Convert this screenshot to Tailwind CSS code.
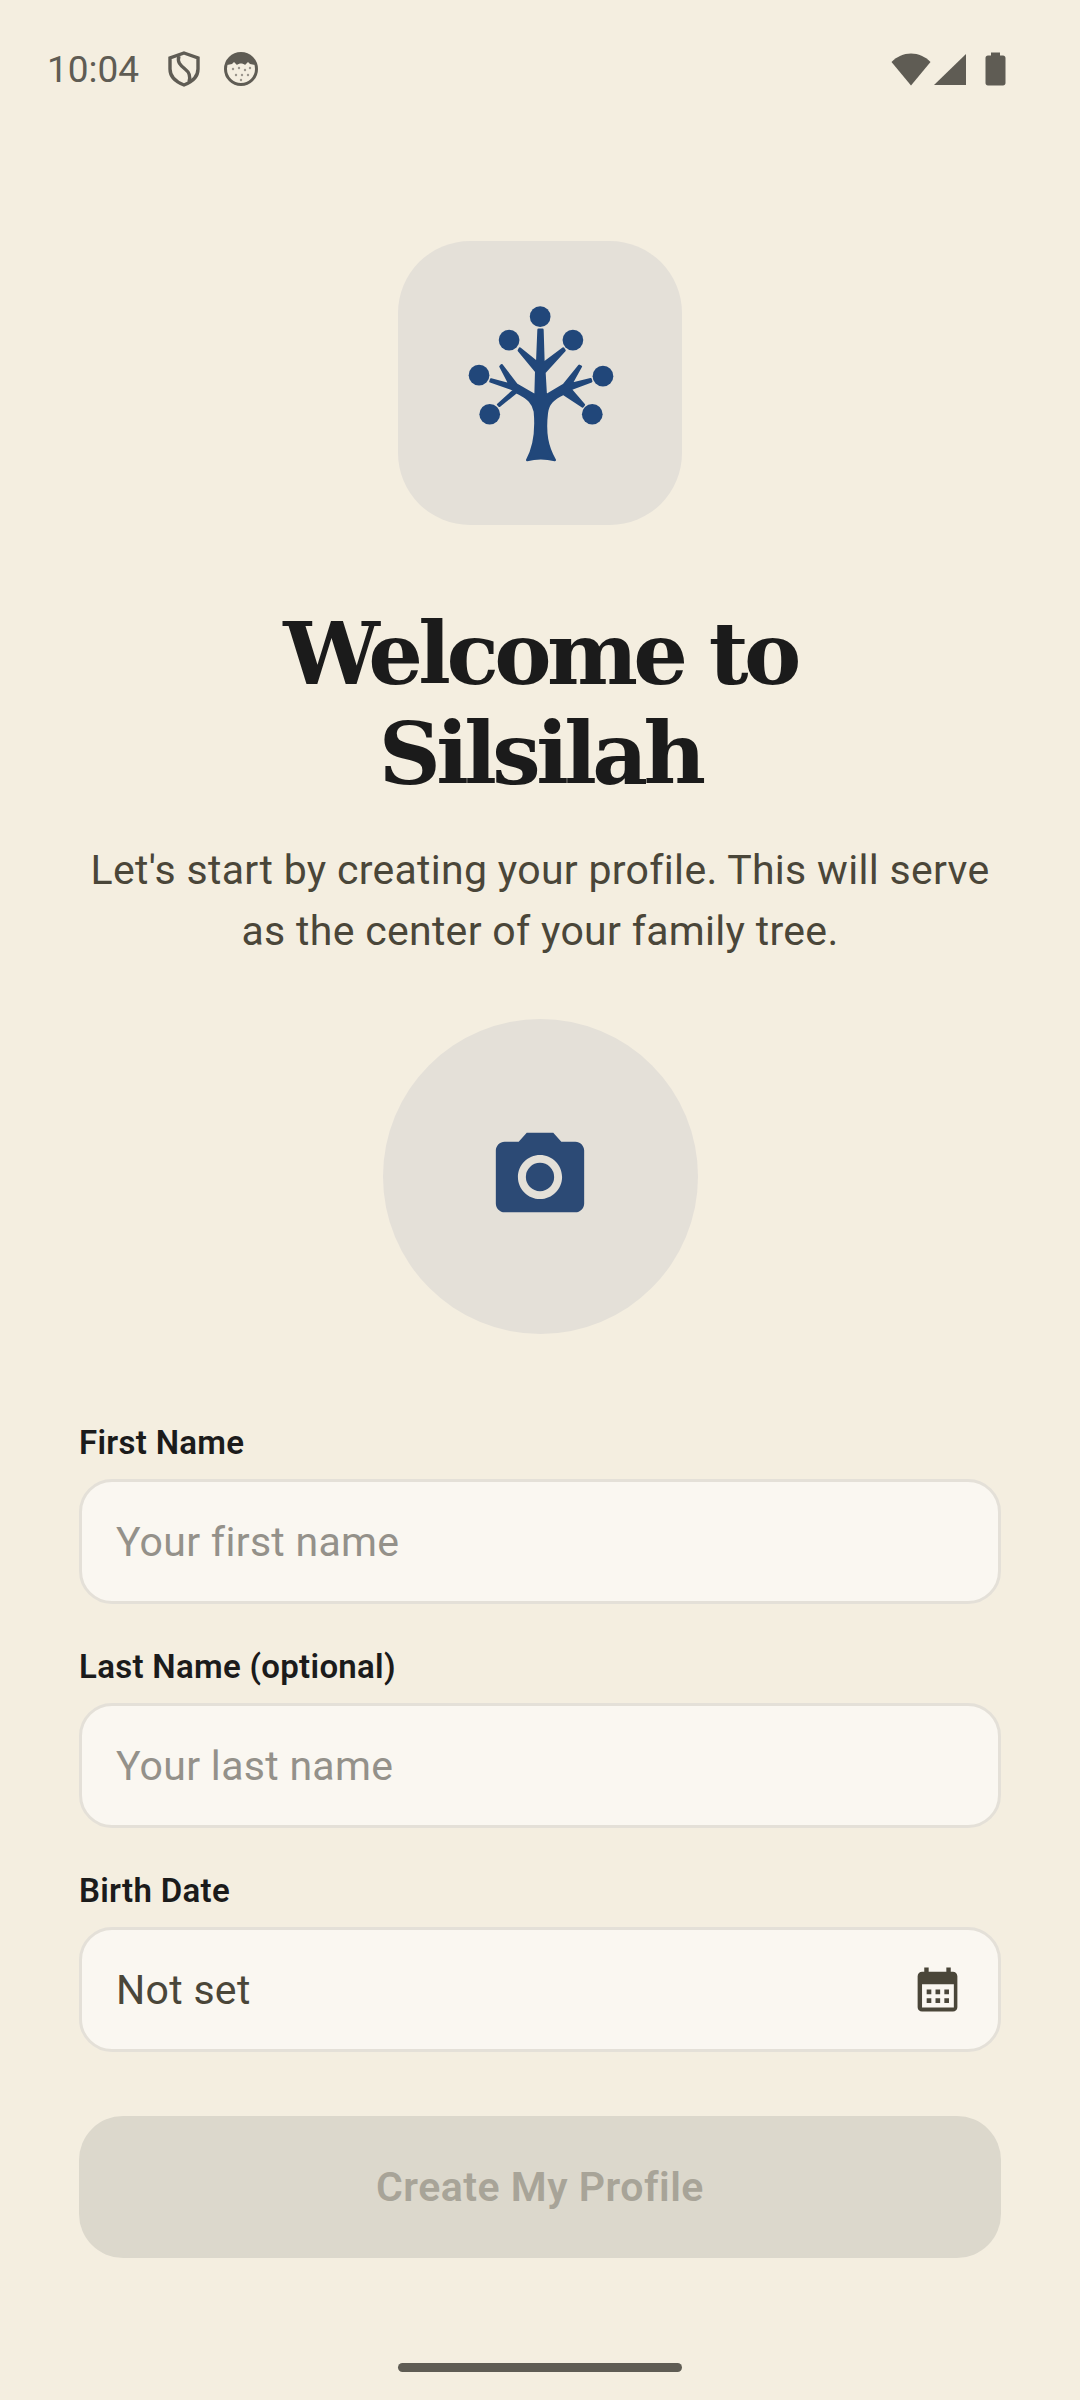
<!DOCTYPE html>
<html lang="en">
    <head>
        <meta charset="UTF-8" />
        <meta name="viewport" content="width=device-width, initial-scale=1.0" />
        <title>Silsilah</title>
        <script src="https://cdn.jsdelivr.net/npm/@tailwindcss/browser@4"></script>
    </head>
    <body class="bg-[#f4eee0] font-['Roboto',sans-serif]">
        <div class="flex h-[2400px] w-[1080px] flex-col items-center overflow-hidden">
            <!-- Status bar -->
            <div class="flex h-[138px] w-full items-center justify-between pl-[47px] pr-[74px] text-[#5f5c54]">
                <div class="flex items-center">
                    <span class="w-[121px] text-[37px] leading-none">10:04</span>
                    <svg class="h-[36px] w-[32px]" viewBox="0 0 32 36" fill="none" stroke="currentColor" stroke-width="3.4">
                        <path d="M16 2 L30 7 V18 C30 26 24 31 16 34 C8 31 2 26 2 18 V7 Z" />
                        <path d="M11 5 C9 11 12 14 17 18 C21 21 23 25 21 31" />
                    </svg>
                    <svg class="ml-[24px] h-[34px] w-[34px]" viewBox="0 0 34 34">
                        <circle cx="17" cy="17" r="15.5" fill="none" stroke="currentColor" stroke-width="3" />
                        <path d="M3 13 C5 5 11 1.500 17 1.500 C23 1.500 29 5 31 13 L26 12 L24 10 L21 13 C19 11 15 11 13 13 L10 10 L8 12 Z" fill="currentColor" />
                        <g fill="currentColor" opacity="0.6">
                            <circle cx="9" cy="17" r="1.200" /><circle cx="15" cy="16" r="1.200" /><circle cx="21" cy="18" r="1.200" /><circle cx="26" cy="16" r="1.200" />
                            <circle cx="12" cy="23" r="1.200" /><circle cx="18" cy="23" r="1.200" /><circle cx="24" cy="23" r="1.200" /><circle cx="17" cy="28" r="1.200" />
                        </g>
                    </svg>
                </div>
                <div class="flex items-center">
                    <svg class="h-[33px] w-[40px]" viewBox="0 0 40 33" fill="currentColor"><path d="M20 32.500 L0.500 9 C6 3.500 12.500 0.500 20 0.500 C27.500 0.500 34 3.500 39.500 9 Z" /></svg>
                    <svg class="ml-[2px] h-[33px] w-[34px]" viewBox="0 0 34 33" fill="currentColor"><path d="M33 1 V32 H1 Z" /></svg>
                    <svg class="ml-[18px] h-[34px] w-[21px]" viewBox="0 0 21 34" fill="currentColor"><path d="M6 0.500 H15 V3.500 H18 C19.500 3.500 20.500 4.500 20.500 6 V31 C20.500 32.500 19.500 33.500 18 33.500 H3 C1.500 33.500 0.500 32.500 0.500 31 V6 C0.500 4.500 1.500 3.500 3 3.500 H6 Z" /></svg>
                </div>
            </div>

            <!-- Logo -->
            <div class="mt-[103px] flex h-[284px] w-[284px] shrink-0 items-center justify-center rounded-[72px] bg-[#e4e0d8]">
                <svg class="h-[157px] w-[147px]" viewBox="230 226 440 470" fill="#21477a">
                    <circle cx="449" cy="261" r="31" /><circle cx="356" cy="331" r="31" /><circle cx="547" cy="331" r="31" />
                    <circle cx="266" cy="436" r="31" /><circle cx="637" cy="439" r="31" /><circle cx="298" cy="553" r="31" /><circle cx="605" cy="553" r="31" />
                    <path stroke="#21477a" stroke-width="7" stroke-linejoin="round" d="M410 690 C432 650 438 600 433 545 C428 520 415 505 378 487 L327 528 L323 524 L372 480 L300 455 L302 449 L358 464 L330 410 L334 406 L378 464 L435 497 L437 425 L385 362 L388 356 L440 398 L444 300 L456 300 L459 400 L518 356 L522 362 L462 428 L466 497 L520 465 L566 408 L571 410 L542 462 L600 448 L602 455 L540 478 L580 525 L576 530 L518 492 C490 505 472 520 469 550 C462 610 470 650 493 690 Q450 680 410 690 Z" />
                </svg>
            </div>

            <!-- Heading -->
            <h1 class="mt-[79px] w-[640px] text-center font-['DejaVu_Serif',serif] text-[86px] font-bold leading-[100px] tracking-[-4.6px] text-[#1b1b1b]">Welcome to Silsilah</h1>
            <p class="mt-[36px] w-[920px] text-center text-[41px] leading-[61px] tracking-[0.3px] text-[#4a4639]">Let's start by creating your profile. This will serve as the center of your family tree.</p>

            <!-- Photo picker -->
            <div class="mt-[57px] flex h-[315px] w-[315px] shrink-0 items-center justify-center rounded-full bg-[#e4e0d8]">
                <svg class="h-[106px] w-[106px]" viewBox="0 0 24 24" fill="#2c4a75">
                    <circle cx="12" cy="12" r="3.200" />
                    <path d="M9 2L7.170 4H4c-1.100 0-2 .9-2 2v12c0 1.100.9 2 2 2h16c1.100 0 2-.9 2-2V6c0-1.100-.9-2-2-2h-3.170L15 2H9zm3 15c-2.760 0-5-2.240-5-5s2.240-5 5-5 5 2.240 5 5-2.240 5-5 5z" />
                </svg>
            </div>

            <!-- Form -->
            <div class="mt-[86px] flex w-[922px] flex-col gap-[40px]">
                <div>
                    <div class="text-[33px] font-semibold leading-[46px] tracking-[0.3px] text-[#1b1b1b]">First Name</div>
                    <div class="mt-[13px] flex h-[125px] items-center rounded-[33px] border-[3px] border-[#e4e0d8] bg-[#faf7f1] px-[34px] pt-[3px] text-[41px] tracking-[0.3px] text-[#94918a]">Your first name</div>
                </div>
                <div>
                    <div class="text-[33px] font-semibold leading-[46px] tracking-[0.3px] text-[#1b1b1b]">Last Name (optional)</div>
                    <div class="mt-[13px] flex h-[125px] items-center rounded-[33px] border-[3px] border-[#e4e0d8] bg-[#faf7f1] px-[34px] pt-[3px] text-[41px] tracking-[0.3px] text-[#94918a]">Your last name</div>
                </div>
                <div>
                    <div class="text-[33px] font-semibold leading-[46px] tracking-[0.3px] text-[#1b1b1b]">Birth Date</div>
                    <div class="mt-[13px] flex h-[125px] items-center justify-between rounded-[33px] border-[3px] border-[#e4e0d8] bg-[#faf7f1] px-[34px] text-[41px] tracking-[0.3px] text-[#4a4639]">
                        <span class="pt-[3px]">Not set</span>
                        <svg class="h-[53px] w-[53px]" viewBox="0 0 24 24" fill="#4a4639" fill-rule="evenodd">
                            <path d="M19 4h-1V2h-2v2H8V2H6v2H5C3.900 4 3 4.900 3 6v14c0 1.100.9 2 2 2h14c1.100 0 2-.9 2-2V6c0-1.100-.9-2-2-2zM5 9.600h14.400v10.600H5z" />
                            <path d="M7.100 12h2.100v2.100H7.100zM11.100 12h2.100v2.100h-2.100zM15.100 12h2.100v2.100h-2.100zM7.100 16h2.100v2.100H7.100zM11.100 16h2.100v2.100h-2.100zM15.100 16h2.100v2.100h-2.100z" />
                        </svg>
                    </div>
                </div>
            </div>

            <button class="mt-[64px] flex h-[142px] w-[922px] shrink-0 items-center justify-center rounded-[44px] bg-[#dcd8cc] pt-[2px] text-[41px] font-semibold tracking-[0.5px] text-[#a8a498]">Create My Profile</button>

            <!-- Gesture bar -->
            <div class="mt-[105px] h-[9px] w-[284px] shrink-0 rounded-full bg-[#5f5c54]"></div>
        </div>
    </body>
</html>
